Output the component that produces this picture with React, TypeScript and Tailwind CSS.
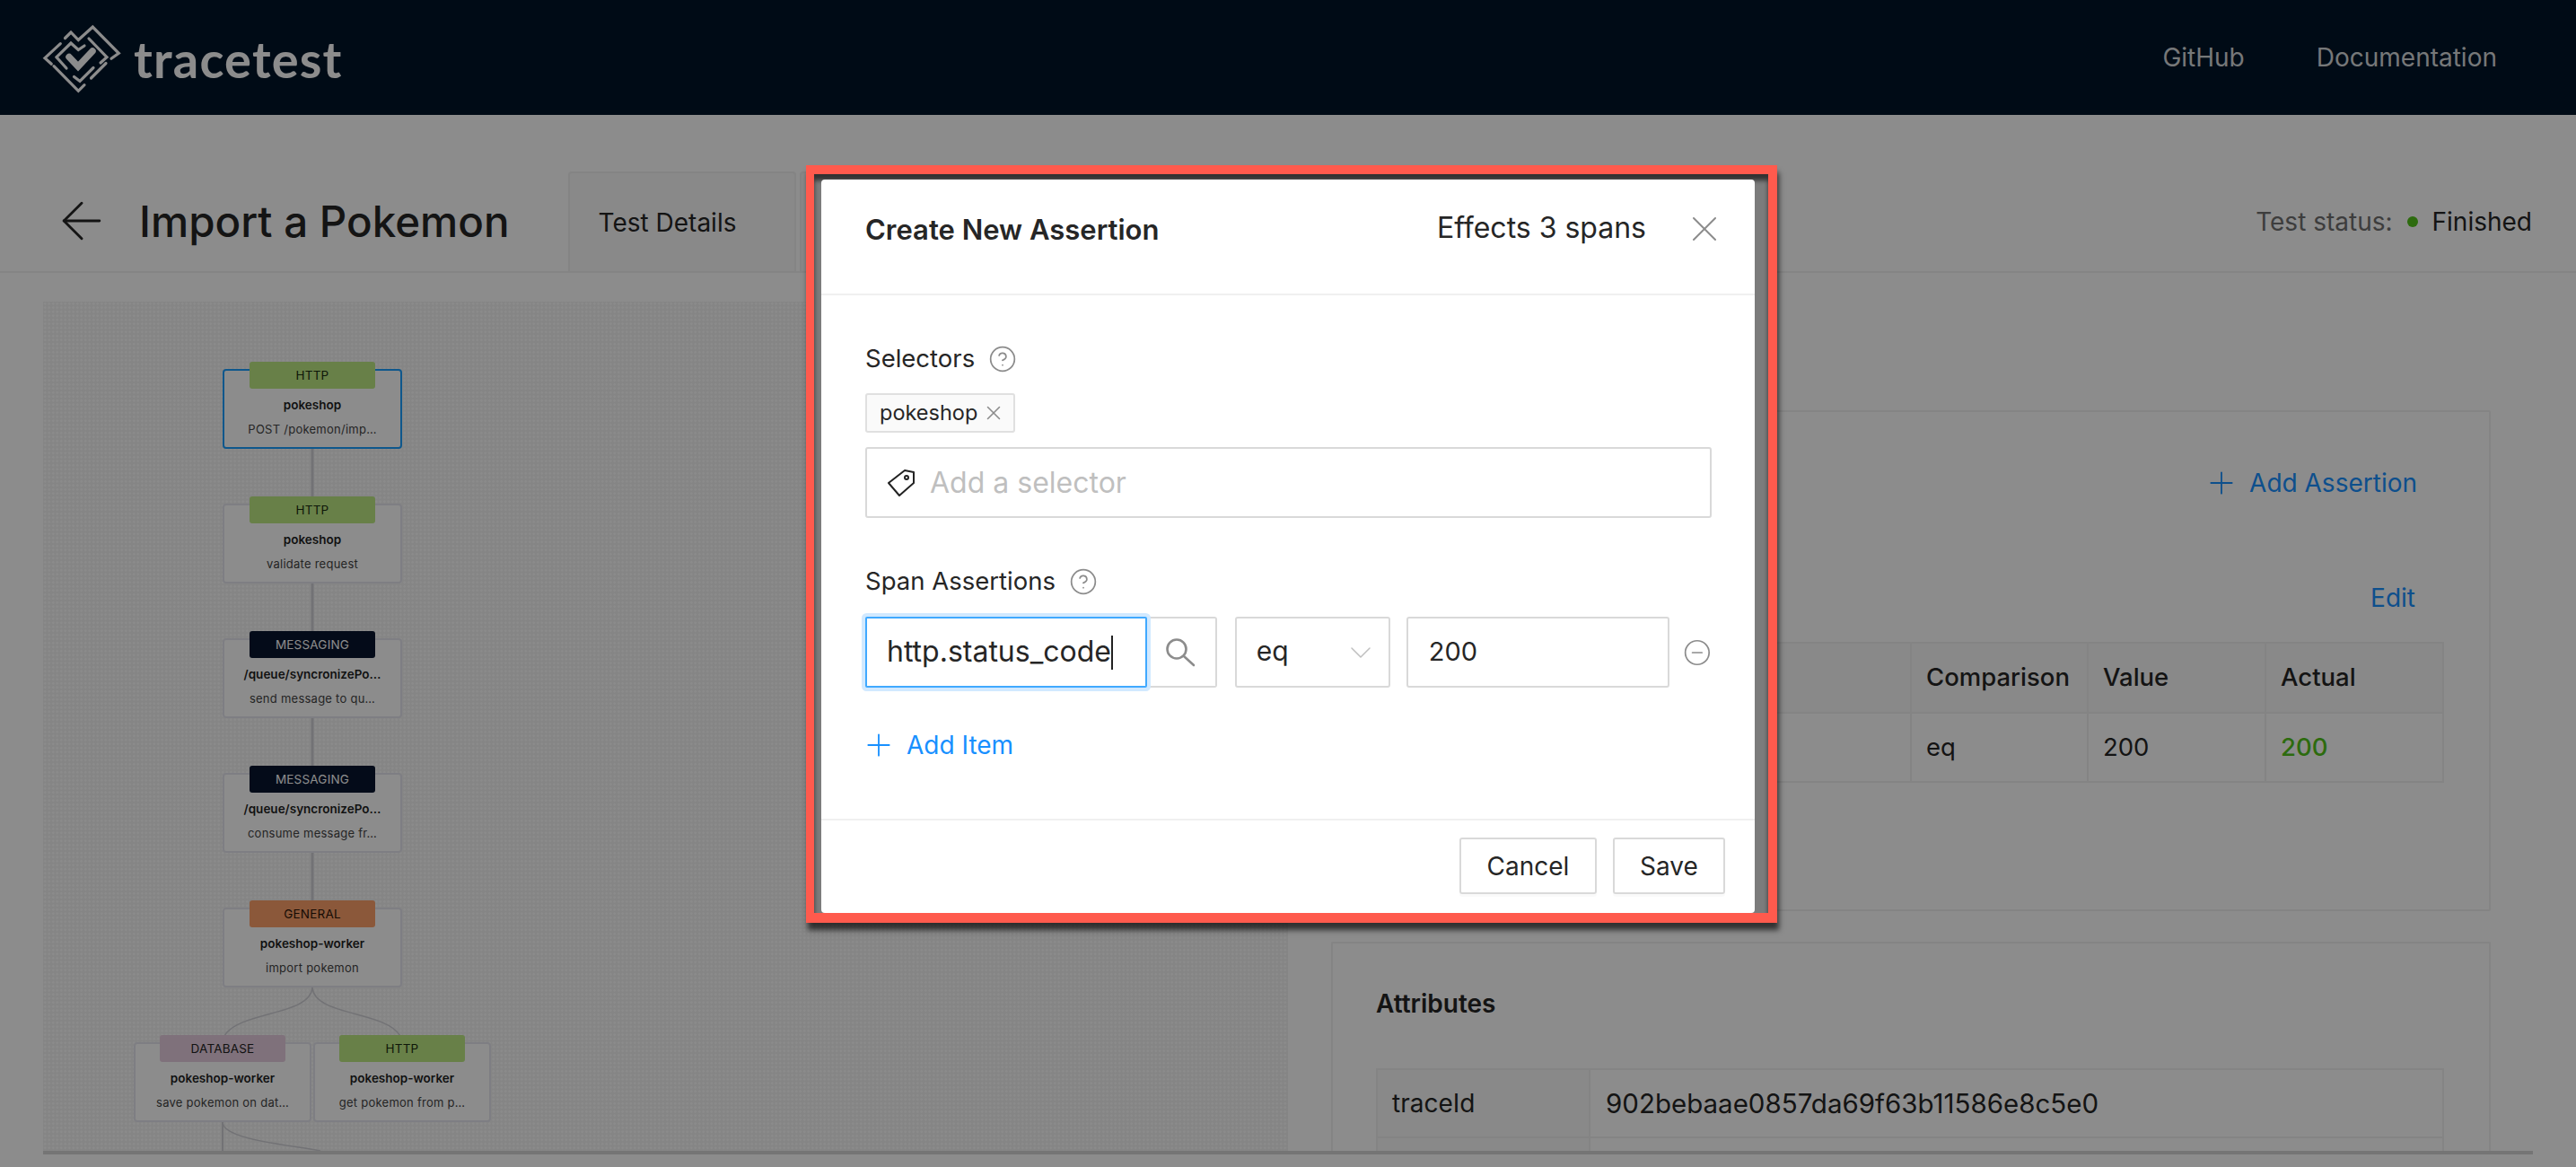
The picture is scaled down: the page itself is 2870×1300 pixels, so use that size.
import { ArrowLeft, ChevronDown, CircleHelp, CircleMinus, Plus, X } from "lucide-react";

const font = "font-['Inter','Liberation_Sans',sans-serif]";

function Logo() {
  return (
    <svg width="96" height="84" viewBox="0 0 96 84" fill="none" stroke="#fff" strokeWidth="3.2" strokeLinecap="round" strokeLinejoin="miter" className="shrink-0">
      <polyline points="28.5,20.5 35,14 43.3,22.5 59.3,8 88.3,37.3 80,43.3" />
      <polyline points="23.3,26.7 6,42.7 13.3,49.3" />
      <polyline points="16,51.7 43.3,79.3 50,72.7" />
      <polyline points="19,41.7 35,26 43.3,33.5 50,29" />
      <polyline points="55,21 75,41.7 68,48" />
      <polyline points="19,41.7 30,54" />
      <polyline points="38.5,63.5 45,68.5 60,53.5" />
      <polyline points="57.5,65 74,48.5" />
      <polyline points="33,41.5 43,52 59,35" strokeWidth="7.5" />
    </svg>
  );
}

type N = { left: number; top: number; w: number; badge: string; color: string; name: string; desc: string; selected?: boolean };

const nodes: N[] = [
  { left: 248, top: 411, w: 200, badge: "HTTP", color: "bg-[#bdea83] text-[#1a2a10]", name: "pokeshop", desc: "POST /pokemon/imp…", selected: true },
  { left: 248, top: 561, w: 200, badge: "HTTP", color: "bg-[#bdea83] text-[#1a2a10]", name: "pokeshop", desc: "validate request" },
  { left: 248, top: 711, w: 200, badge: "MESSAGING", color: "bg-[#09152f] text-[#fff]", name: "/queue/syncronizePo…", desc: "send message to qu…" },
  { left: 248, top: 861, w: 200, badge: "MESSAGING", color: "bg-[#09152f] text-[#fff]", name: "/queue/syncronizePo…", desc: "consume message fr…" },
  { left: 248, top: 1011, w: 200, badge: "GENERAL", color: "bg-[#fda16a] text-[#2a1408]", name: "pokeshop-worker", desc: "import pokemon" },
  { left: 149, top: 1161, w: 198, badge: "DATABASE", color: "bg-[#e8cee0] text-[#222]", name: "pokeshop-worker", desc: "save pokemon on dat…" },
  { left: 349, top: 1161, w: 198, badge: "HTTP", color: "bg-[#bdea83] text-[#1a2a10]", name: "pokeshop-worker", desc: "get pokemon from p…" },
];

function Node({ n }: { n: N }) {
  return (
    <div
      style={{ left: n.left - 48, top: n.top - 336, width: n.w }}
      className={`absolute h-[89px] rounded-[4px] border-2 bg-white flex flex-col items-center ${n.selected ? "border-[#1a9fff]" : "border-[#e6e6ee]"}`}
    >
      <div className={`absolute -top-[10px] left-1/2 -translate-x-1/2 w-[140px] h-[30px] rounded-[3px] flex items-center justify-center text-[13.5px] tracking-[0.2px] ${n.color}`}>{n.badge}</div>
      <div className="mt-[27px] h-[22px] leading-[22px] text-[13.5px] font-semibold text-[#1f1f1f] whitespace-nowrap">{n.name}</div>
      <div className="mt-[5px] h-[22px] leading-[22px] text-[13px] tracking-[0.25px] text-[#444] whitespace-nowrap">{n.desc}</div>
    </div>
  );
}

function TagIcon() {
  return (
    <svg width="32" height="32" viewBox="0 0 32 32" fill="none" stroke="#222" strokeWidth="2" strokeLinejoin="round" className="shrink-0">
      <path d="M2 16 L20 2 L30 4 L30 16 L14 30 Z" />
      <circle cx="22" cy="10" r="2" />
    </svg>
  );
}

function SearchIcon() {
  return (
    <svg width="34" height="32" viewBox="0 0 34 32" fill="none" stroke="#8c8c8c" strokeWidth="2.6" strokeLinecap="round" className="shrink-0">
      <circle cx="13" cy="12" r="10.5" />
      <path d="M21 20 L32 30" />
    </svg>
  );
}

export default function App() {
  return (
    <div className={`relative w-[2870px] h-[1300px] overflow-hidden bg-white ${font}`}>
      {/* header */}
      <header className="h-[128px] bg-[#001529] flex items-center justify-between pl-[44px] pr-[88px]">
        <div className="flex items-center gap-[9px]">
          <Logo />
          <span className="font-['Lato',sans-serif] text-[56px] font-bold leading-none tracking-[1.2px] text-white mt-[3px]">tracetest</span>
        </div>
        <nav className="flex items-center gap-[80px] text-[28px] text-[#ffffffd9]">
          <span>GitHub</span>
          <span>Documentation</span>
        </nav>
      </header>

      {/* sub header */}
      <div className="h-[176px] border-b-2 border-[#f0f0f0] flex items-end">
        <div className="h-[110px] flex items-center self-end pl-[57px]">
          <ArrowLeft size={68} strokeWidth={1} color="#262626" className="-mt-[2px]" />
          <h1 className="ml-[30px] text-[47.5px] font-medium leading-none text-[#262626] whitespace-nowrap">Import a Pokemon</h1>
        </div>
        <div className="ml-[65px] w-[254px] h-[111px] border-2 border-b-0 border-[#f0f0f0] rounded-t-[4px] bg-[#fafafa] flex items-center pl-[32px] text-[28px] text-[#262626]">Test Details</div>
        <div className="ml-[4px] w-[254px] h-[111px] border-2 border-b-0 border-[#f0f0f0] rounded-t-[4px] bg-[#fafafa]" />
        <div className="flex-1 h-[111px] flex items-center justify-end pr-[49px] text-[28px] -mt-[2px]">
          <span className="text-[#6f6f6f]">Test status:</span>
          <span className="ml-[16px] w-[12px] h-[12px] rounded-full bg-[#52c41a]" />
          <span className="ml-[16px] text-[#262626]">Finished</span>
        </div>
      </div>

      {/* main */}
      <main className="mx-[48px] h-[982px] pt-[32px] border-b-4 border-[#d6d6d6] overflow-hidden flex">
        <section className="relative w-[1387px] h-[950px] shrink-0 bg-[#f3f3f3] bg-[radial-gradient(circle,#ffffff_1.2px,transparent_1.3px)] bg-[size:4.5px_4.5px]">
          <svg className="absolute left-0 top-0" width="1387" height="950" fill="none" stroke="#d0d0d6" strokeWidth="1.5">
            <path d="M300 164 V226" strokeWidth="3" />
            <path d="M300 314 V376" strokeWidth="3" />
            <path d="M300 464 V526" strokeWidth="3" />
            <path d="M300 614 V676" strokeWidth="3" />
            <path d="M300 764 C298 796 218 790 202 818" />
            <path d="M300 764 C302 796 382 790 398 818" />
            <path d="M200 914 V950" strokeWidth="2" />
            <path d="M200 914 C200 934 280 940 309 946" />
          </svg>
          {nodes.map((n, i) => (
            <Node key={i} n={n} />
          ))}
        </section>

        <section className="flex-1 pl-[48px] pr-[47px] pt-[121px] flex flex-col gap-[34px] text-[28px] text-[#262626]">
          <div className="h-[558px] shrink-0 border-2 border-[#f0f0f0] rounded-[2px] relative">
            <div className="absolute right-[80px] top-[59px] h-[40px] flex items-center text-[#1890ff]">
              <Plus size={40} strokeWidth={1.1} />
              <span className="ml-[11px]">Add Assertion</span>
            </div>
            <span className="absolute right-[82px] top-[186px] text-[#1890ff]">Edit</span>
            <div className="absolute left-[50px] right-[50px] top-[256px] border-2 border-[#f0f0f0] text-[27.5px]">
              <div className="flex h-[78px] bg-[#fafafa] border-b-2 border-[#f0f0f0] font-medium">
                <div className="w-[593px] border-r-2 border-[#f0f0f0]" />
                <div className="w-[197px] border-r-2 border-[#f0f0f0] flex items-center pl-[16px]">Comparison</div>
                <div className="w-[198px] border-r-2 border-[#f0f0f0] flex items-center pl-[16px]">Value</div>
                <div className="flex-1 flex items-center pl-[16px]">Actual</div>
              </div>
              <div className="flex h-[75px]">
                <div className="w-[593px] border-r-2 border-[#f0f0f0]" />
                <div className="w-[197px] border-r-2 border-[#f0f0f0] flex items-center pl-[16px]">eq</div>
                <div className="w-[198px] border-r-2 border-[#f0f0f0] flex items-center pl-[16px]">200</div>
                <div className="flex-1 flex items-center pl-[16px] text-[#52c41a] font-medium">200</div>
              </div>
            </div>
          </div>
          <div className="flex-1 border-2 border-b-0 border-[#f0f0f0] rounded-[2px] pl-[48px] pr-[50px]">
            <div className="mt-[50px] h-[34px] leading-[34px] font-semibold">Attributes</div>
            <div className="mt-[55px] border-2 border-[#f0f0f0]">
              <div className="flex h-[76px] border-b-2 border-[#f0f0f0]">
                <div className="w-[237px] bg-[#fafafa] border-r-2 border-[#f0f0f0] flex items-center pl-[16px]">traceId</div>
                <div className="flex-1 flex items-center pl-[17px] text-[29.5px]">902bebaae0857da69f63b11586e8c5e0</div>
              </div>
              <div className="flex h-[76px]">
                <div className="w-[237px] bg-[#fafafa] border-r-2 border-[#f0f0f0]" />
              </div>
            </div>
          </div>
        </section>
      </main>

      {/* mask */}
      <div className="absolute inset-0 bg-black/45" />

      {/* annotated modal */}
      <div className="absolute left-[898px] top-[184px] w-[1082px] h-[844px] border-t-[10px] border-l-[9px] border-r-[10px] border-b-[11px] border-[#ff5a4d] bg-[#7c7c7c] pt-[6px] pl-[8px] pr-[15px] shadow-[2px_8px_6px_rgba(0,0,0,0.65),inset_0_7px_5px_rgba(0,0,0,0.6)]">
        <div className="relative h-[817px] bg-white rounded-[4px] flex flex-col text-[#262626]">
          <div className="h-[129px] shrink-0 border-b-2 border-[#f0f0f0] flex items-center pl-[49px] pr-[32px]">
            <h2 className="text-[31px] font-semibold leading-none -mt-[16px]">Create New Assertion</h2>
            <span className="ml-auto text-[32px] leading-none -mt-[20px]">Effects 3 spans</span>
            <X size={48} strokeWidth={1} color="#8c8c8c" className="ml-[41px] -mt-[18px]" />
          </div>

          <div className="flex-1 pl-[49px] pr-[48px] pt-[54px] flex flex-col">
            <div className="h-[34px] flex items-center text-[27.5px]">
              <span>Selectors</span>
              <CircleHelp size={32} strokeWidth={1.3} color="#8c8c8c" className="ml-[15px]" />
            </div>
            <div className="mt-[21px] self-start h-[44px] px-[14px] border-2 border-[#e0e0e0] bg-[#fafafa] rounded-[3px] flex items-center text-[23.5px]">
              <span>pokeshop</span>
              <X size={26} strokeWidth={1.4} color="#8c8c8c" className="ml-[5px] -mr-[5px]" />
            </div>
            <div className="mt-[16px] h-[79px] border-2 border-[#d9d9d9] rounded-[3px] flex items-center pl-[22px]">
              <TagIcon />
              <span className="ml-[16px] text-[32px] text-[#bfbfbf]">Add a selector</span>
            </div>

            <div className="mt-[54px] h-[34px] flex items-center text-[27.5px]">
              <span>Span Assertions</span>
              <CircleHelp size={32} strokeWidth={1.3} color="#8c8c8c" className="ml-[15px]" />
            </div>
            <div className="mt-[22px] flex items-center h-[79px] text-[30px]">
              <div className="relative z-10 w-[316px] h-[79px] border-2 border-[#40a9ff] rounded-[2px] shadow-[0_0_0_4px_#d1e9ff] flex items-center pl-[22px] bg-white text-[32px]">
                <span className="-mt-[2px]">http.status_code</span>
                <span className="w-[2px] h-[38px] bg-[#222]" />
              </div>
              <div className="w-[78px] h-[79px] border-2 border-l-0 border-[#d9d9d9] rounded-r-[3px] flex items-center justify-center pr-[2px]">
                <SearchIcon />
              </div>
              <div className="ml-[20px] w-[174px] h-[79px] border-2 border-[#d9d9d9] rounded-[3px] flex items-center justify-between pl-[22px] pr-[11px]">
                <span className="-mt-[2px]">eq</span>
                <ChevronDown size={40} strokeWidth={0.9} color="#bfbfbf" />
              </div>
              <div className="ml-[18px] w-[295px] h-[79px] border-2 border-[#d9d9d9] rounded-[3px] flex items-center pl-[23px] text-[29px]">
                <span className="-mt-[2px]">200</span>
              </div>
              <CircleMinus size={32} strokeWidth={1.3} color="#8c8c8c" className="ml-[15px]" />
            </div>
            <div className="mt-[43px] flex items-center text-[#1890ff] text-[28px] -ml-[5px]">
              <Plus size={40} strokeWidth={1.1} />
              <span className="ml-[11px]">Add Item</span>
            </div>
          </div>

          <div className="h-[105px] shrink-0 border-t-2 border-[#f0f0f0] flex items-start justify-end gap-[18px] pt-[19px] pr-[33px] text-[28px]">
            <button className="w-[153px] h-[63px] border-2 border-[#d9d9d9] rounded-[3px] shadow-[0_3px_0_rgba(0,0,0,0.02)]">Cancel</button>
            <button className="w-[125px] h-[63px] border-2 border-[#d9d9d9] rounded-[3px] shadow-[0_3px_0_rgba(0,0,0,0.02)]">Save</button>
          </div>
        </div>
      </div>
    </div>
  );
}
